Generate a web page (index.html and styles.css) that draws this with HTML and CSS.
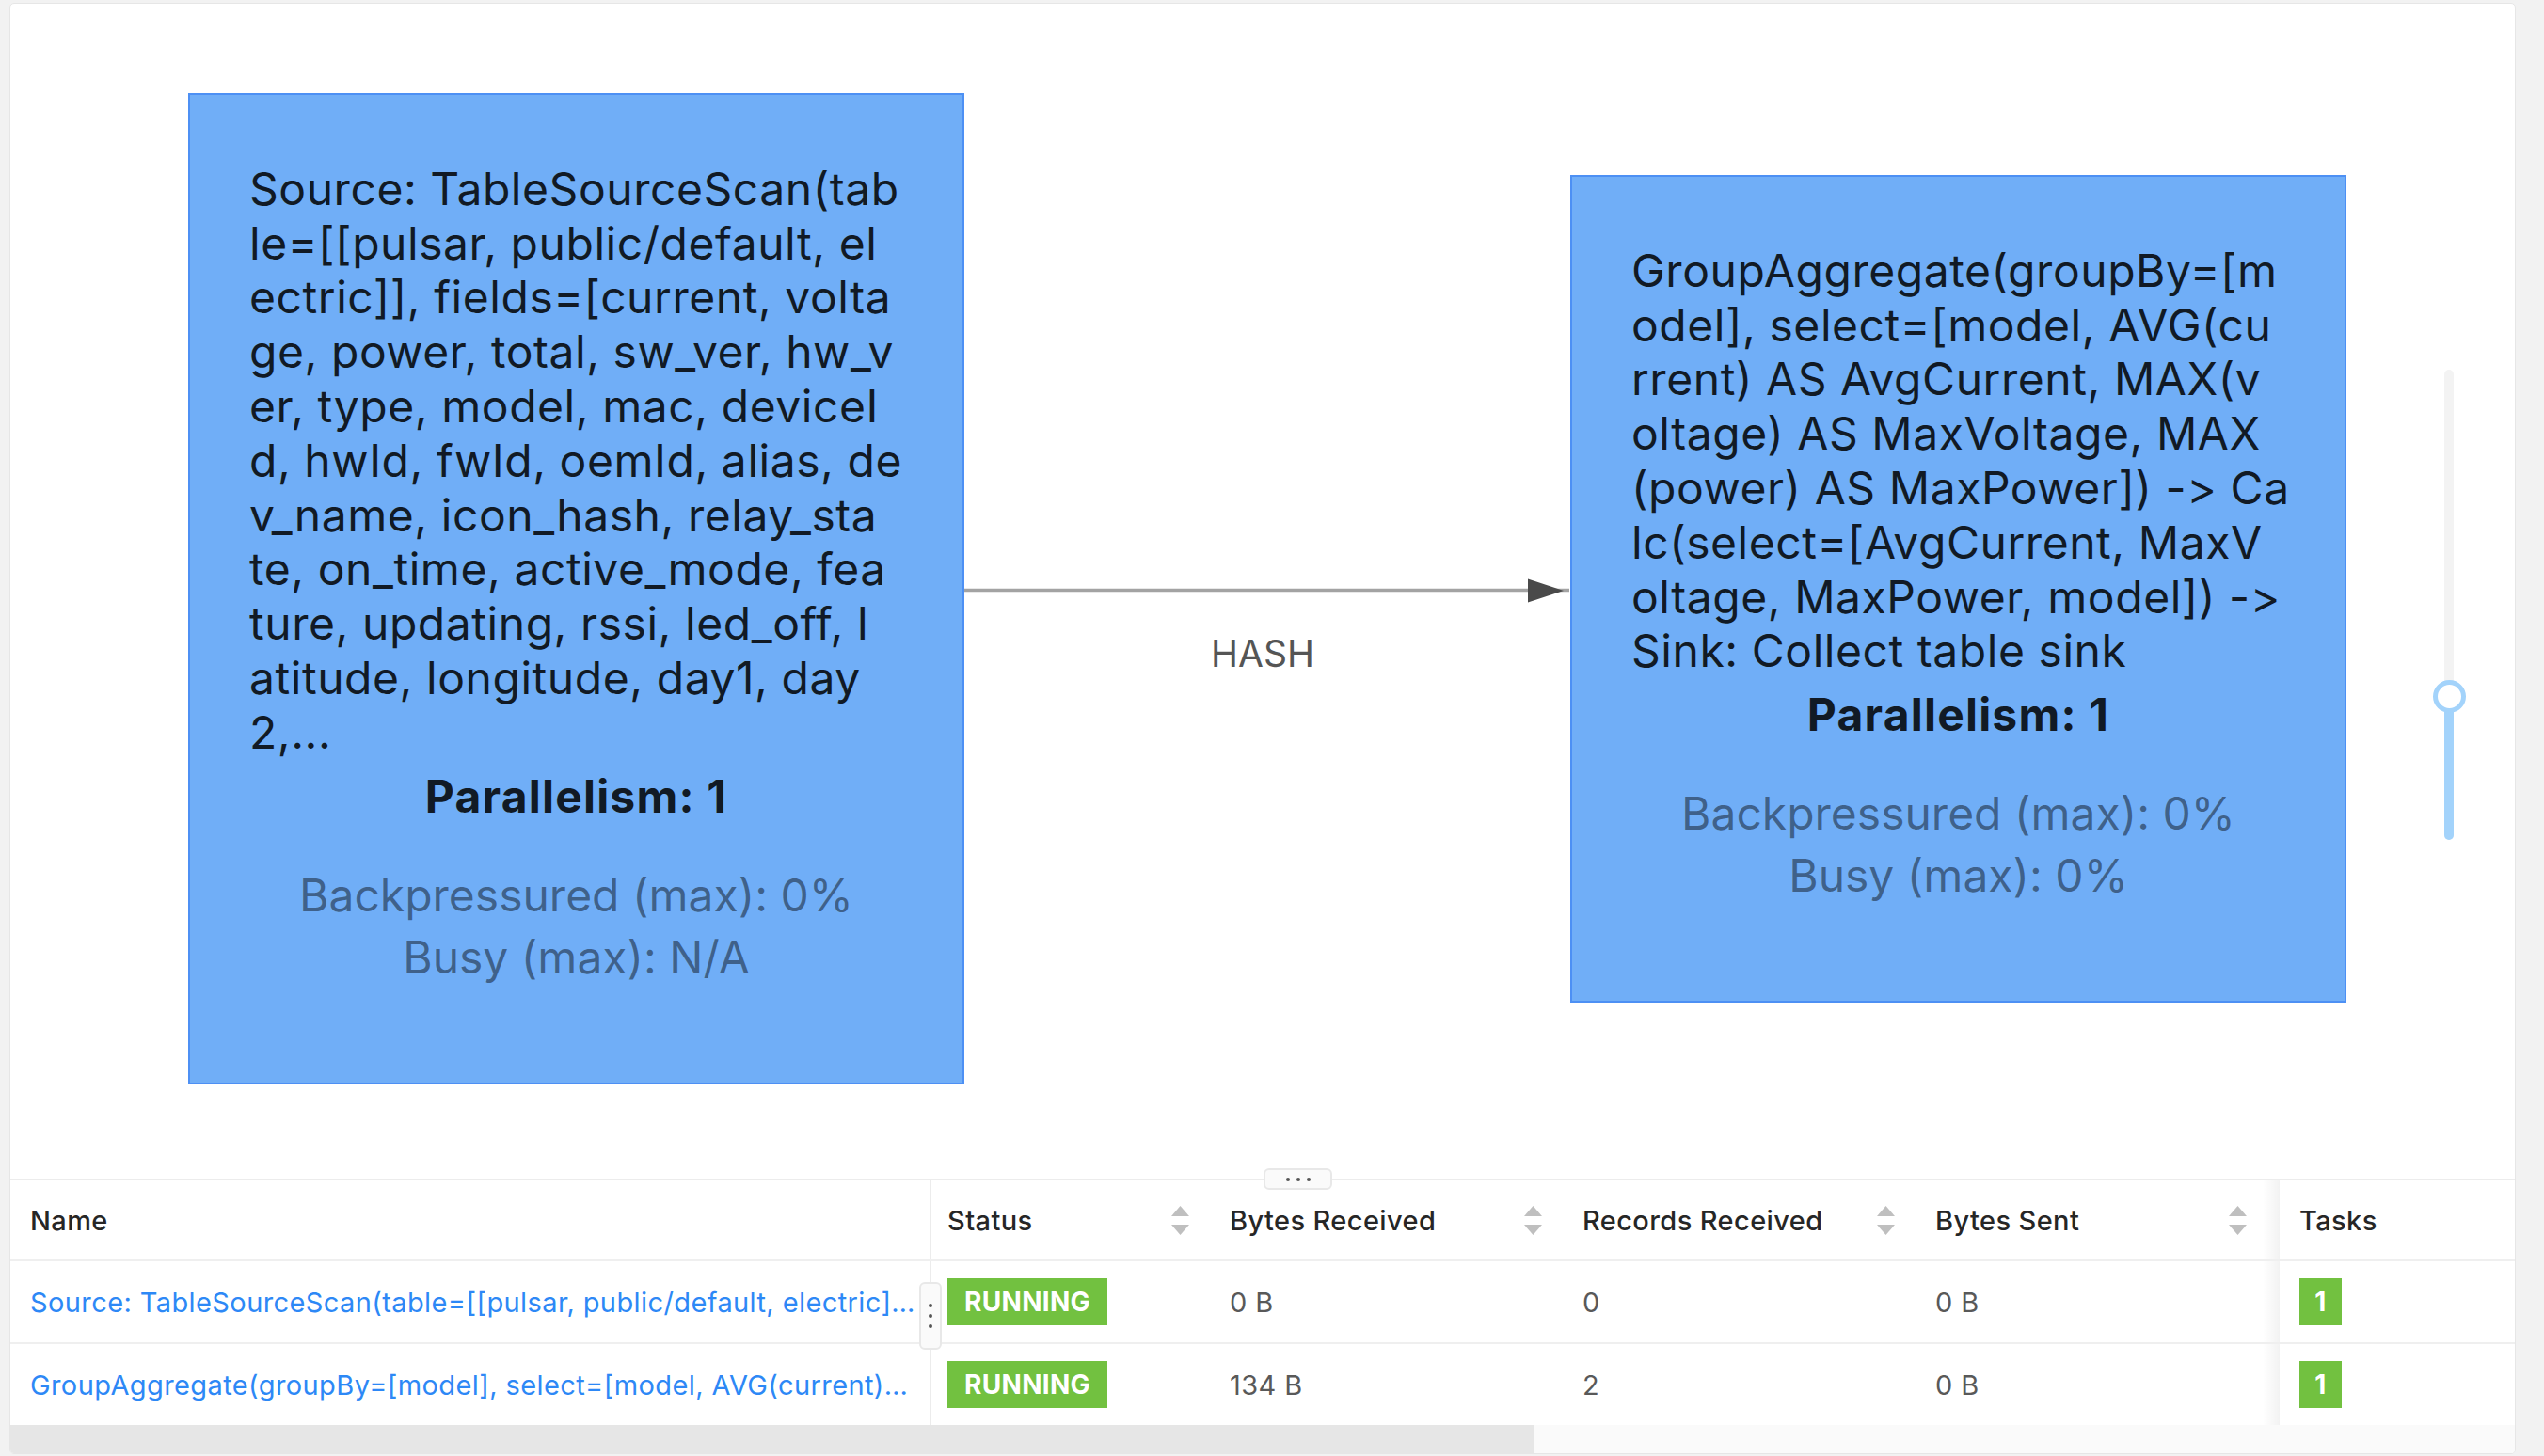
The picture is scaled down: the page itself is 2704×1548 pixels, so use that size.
FILE: index.html
```html
<!DOCTYPE html>
<html lang="en">
<head>
<meta charset="utf-8">
<title>Job Graph</title>
<link rel="stylesheet" href="styles.css">
</head>
<body>
<div class="panel">
  <div class="graph">
    <svg class="edges" width="2662" height="1249" viewBox="0 0 2662 1249">
      <line x1="1014" y1="623.5" x2="1657" y2="623.5" stroke="#a3a3a3" stroke-width="3.5"/>
      <polygon points="1613,611.5 1651,624 1613,636.5" fill="#4a4a4a"/>
    </svg>
    <div class="edge-label">HASH</div>

    <div class="node node-source">
      <p class="op-name">Source: TableSourceScan(tab<br>le=[[pulsar, public/default, el<br>ectric]], fields=[current, volta<br>ge, power, total, sw_ver, hw_v<br>er, type, model, mac, deviceI<br>d, hwId, fwId, oemId, alias, de<br>v_name, icon_hash, relay_sta<br>te, on_time, active_mode, fea<br>ture, updating, rssi, led_off, l<br>atitude, longitude, day1, day<br>2,...</p>
      <p class="parallelism">Parallelism: 1</p>
      <p class="metric first">Backpressured (max): 0%</p>
      <p class="metric">Busy (max): N/A</p>
    </div>

    <div class="node node-sink">
      <p class="op-name">GroupAggregate(groupBy=[m<br>odel], select=[model, AVG(cu<br>rrent) AS AvgCurrent, MAX(v<br>oltage) AS MaxVoltage, MAX<br>(power) AS MaxPower]) -&gt; Ca<br>lc(select=[AvgCurrent, MaxV<br>oltage, MaxPower, model]) -&gt;<br>Sink: Collect table sink</p>
      <p class="parallelism">Parallelism: 1</p>
      <p class="metric first">Backpressured (max): 0%</p>
      <p class="metric">Busy (max): 0%</p>
    </div>

    <div class="zoom-slider">
      <div class="rail"></div>
      <div class="track"></div>
      <div class="knob"></div>
    </div>
  </div>

  <div class="table">
    <div class="split-handle"><i></i><i></i><i></i></div>
    <div class="col-handle"><i></i><i></i><i></i></div>

    <div class="tr thead">
      <div class="cell c-name">Name</div>
      <div class="cell c-status sortable">Status<span class="sorter"><svg width="19" height="31" viewBox="0 0 19 31"><path d="M9.5 0 L19 11 L0 11 Z" fill="#bfbfbf"/><path d="M0 20 L19 20 L9.5 31 Z" fill="#bfbfbf"/></svg></span></div>
      <div class="cell c-num sortable">Bytes Received<span class="sorter"><svg width="19" height="31" viewBox="0 0 19 31"><path d="M9.5 0 L19 11 L0 11 Z" fill="#bfbfbf"/><path d="M0 20 L19 20 L9.5 31 Z" fill="#bfbfbf"/></svg></span></div>
      <div class="cell c-num sortable">Records Received<span class="sorter"><svg width="19" height="31" viewBox="0 0 19 31"><path d="M9.5 0 L19 11 L0 11 Z" fill="#bfbfbf"/><path d="M0 20 L19 20 L9.5 31 Z" fill="#bfbfbf"/></svg></span></div>
      <div class="cell c-sent sortable">Bytes Sent<span class="sorter"><svg width="19" height="31" viewBox="0 0 19 31"><path d="M9.5 0 L19 11 L0 11 Z" fill="#bfbfbf"/><path d="M0 20 L19 20 L9.5 31 Z" fill="#bfbfbf"/></svg></span></div>
      <div class="cell c-tasks">Tasks</div>
    </div>

    <div class="tr">
      <div class="cell c-name"><a class="link">Source: TableSourceScan(table=[[pulsar, public/default, electric]…</a></div>
      <div class="cell c-status"><span class="badge">RUNNING</span></div>
      <div class="cell c-num val">0 B</div>
      <div class="cell c-num val">0</div>
      <div class="cell c-sent val">0 B</div>
      <div class="cell c-tasks"><span class="badge task">1</span></div>
    </div>

    <div class="tr last">
      <div class="cell c-name"><a class="link">GroupAggregate(groupBy=[model], select=[model, AVG(current)…</a></div>
      <div class="cell c-status"><span class="badge">RUNNING</span></div>
      <div class="cell c-num val">134 B</div>
      <div class="cell c-num val">2</div>
      <div class="cell c-sent val">0 B</div>
      <div class="cell c-tasks"><span class="badge task">1</span></div>
    </div>

    <div class="hscroll"><div class="thumb"></div></div>
  </div>
</div>
</body>
</html>
```

FILE: styles.css
```css
* { box-sizing: border-box; }

html, body {
  margin: 0;
  padding: 0;
}

body {
  width: 2704px;
  height: 1548px;
  overflow: hidden;
  background: #f2f2f2;
  font-family: Inter, "Noto Sans", "Liberation Sans", sans-serif;
  font-feature-settings: "calt" 0, "liga" 0;
  font-variant-ligatures: none;
}

.panel {
  margin: 3px 0 0 10px;
  width: 2664px;
  height: 1543px;
  background: #fff;
  border: 1px solid #e6e6e6;
  border-radius: 5px;
  overflow: hidden;
  display: flex;
  flex-direction: column;
}

/* ---------- graph canvas ---------- */
.graph {
  position: relative;
  height: 1249px;
  flex: none;
}

.edges {
  position: absolute;
  left: 0;
  top: 0;
}

.edge-label {
  position: absolute;
  left: 1231px;
  width: 200px;
  top: 671px;
  text-align: center;
  font-size: 39px;
  line-height: 39px;
  color: #555;
}

.node {
  position: absolute;
  width: 825px;
  background: #70aef7;
  border: 2px solid #4d90f4;
  padding: 70.75px 63px 100px;
  color: #111a25;
}

.node-source { left: 189px; top: 95px; }
.node-sink { left: 1658px; top: 182px; }

.op-name {
  margin: 0;
  font-size: 48px;
  line-height: 57.8px;
  letter-spacing: 0.55px;
  white-space: nowrap;
}

.parallelism {
  margin: 10px 0 0;
  font-size: 48px;
  line-height: 57.6px;
  font-weight: 700;
  letter-spacing: 1.2px;
  text-align: center;
}

.metric {
  margin: 0;
  font-size: 48px;
  line-height: 66px;
  text-align: center;
  color: rgba(0, 0, 0, 0.45);
}

.metric.first { margin-top: 43.5px; }

/* ---------- zoom slider ---------- */
.zoom-slider {
  position: absolute;
  left: 2572px;
  top: 389px;
  width: 40px;
  height: 500px;
}

.rail {
  position: absolute;
  left: 15px;
  top: 0;
  width: 10px;
  height: 500px;
  border-radius: 5px;
  background: #f3f3f3;
}

.track {
  position: absolute;
  left: 15px;
  top: 347px;
  width: 10px;
  height: 153px;
  border-radius: 5px;
  background: #a3d3fb;
}

.knob {
  position: absolute;
  left: 2.5px;
  top: 330px;
  width: 35px;
  height: 35px;
  border-radius: 50%;
  border: 5px solid #a3d3fb;
  background: #fff;
}

/* ---------- table ---------- */
.table {
  flex: 1;
  position: relative;
  border-top: 2px solid #ececec;
  display: flex;
  flex-direction: column;
}

.tr {
  display: flex;
  height: 88px;
  border-bottom: 2px solid #efefef;
  flex: none;
}

.tr.thead { height: 86px; }
.tr.last { height: 86px; border-bottom: 0; }

.cell {
  display: flex;
  align-items: center;
  padding: 0 20px;
  font-size: 29px;
  letter-spacing: 0.4px;
  color: #595959;
  white-space: nowrap;
  overflow: hidden;
}

.thead .cell {
  color: #262626;
  font-weight: 500;
}

.c-name {
  width: 979px;
  padding-left: 21px;
  border-right: 2px solid #ececec;
}

.c-status { width: 298px; padding-left: 17px; }
.c-num { width: 375px; padding-left: 19px; }
.c-sent { width: 385px; padding-left: 19px; }
.c-tasks {
  width: 250px;
  padding-left: 21px;
  position: relative;
  overflow: visible;
}

.c-tasks::before {
  content: "";
  position: absolute;
  left: -18px;
  top: 0;
  bottom: 0;
  width: 18px;
  background: linear-gradient(to left, rgba(0, 0, 0, 0.05), rgba(0, 0, 0, 0));
}

.sortable { justify-content: space-between; padding-right: 24px; }
.c-sent.sortable { padding-right: 35px; }

.sorter { display: flex; }

.link {
  color: #2d88f6;
  text-decoration: none;
}

.badge {
  display: inline-flex;
  align-items: center;
  justify-content: center;
  height: 50px;
  width: 170px;
  background: #72c140;
  color: #fff;
  font-weight: 700;
  font-size: 28px;
  letter-spacing: 0.3px;
}

.badge.task { width: 45px; }

.hscroll {
  height: 30px;
  background: #fafafa;
  flex: none;
}

.thumb {
  width: 1619px;
  height: 100%;
  background: #e6e6e6;
}

.split-handle {
  position: absolute;
  left: 1332px;
  top: -13px;
  width: 73px;
  height: 23px;
  border: 2px solid #e8e8e8;
  border-radius: 6px;
  background: #fafafa;
  display: flex;
  justify-content: center;
  align-items: center;
  gap: 7px;
  z-index: 2;
}

.split-handle i,
.col-handle i {
  display: block;
  width: 4px;
  height: 4px;
  border-radius: 50%;
  background: #555;
}

.col-handle {
  position: absolute;
  left: 966px;
  top: 108px;
  width: 24px;
  height: 72px;
  border: 2px solid #e8e8e8;
  border-radius: 6px;
  background: #fafafa;
  display: flex;
  flex-direction: column;
  justify-content: center;
  align-items: center;
  gap: 7px;
  z-index: 2;
}
```
